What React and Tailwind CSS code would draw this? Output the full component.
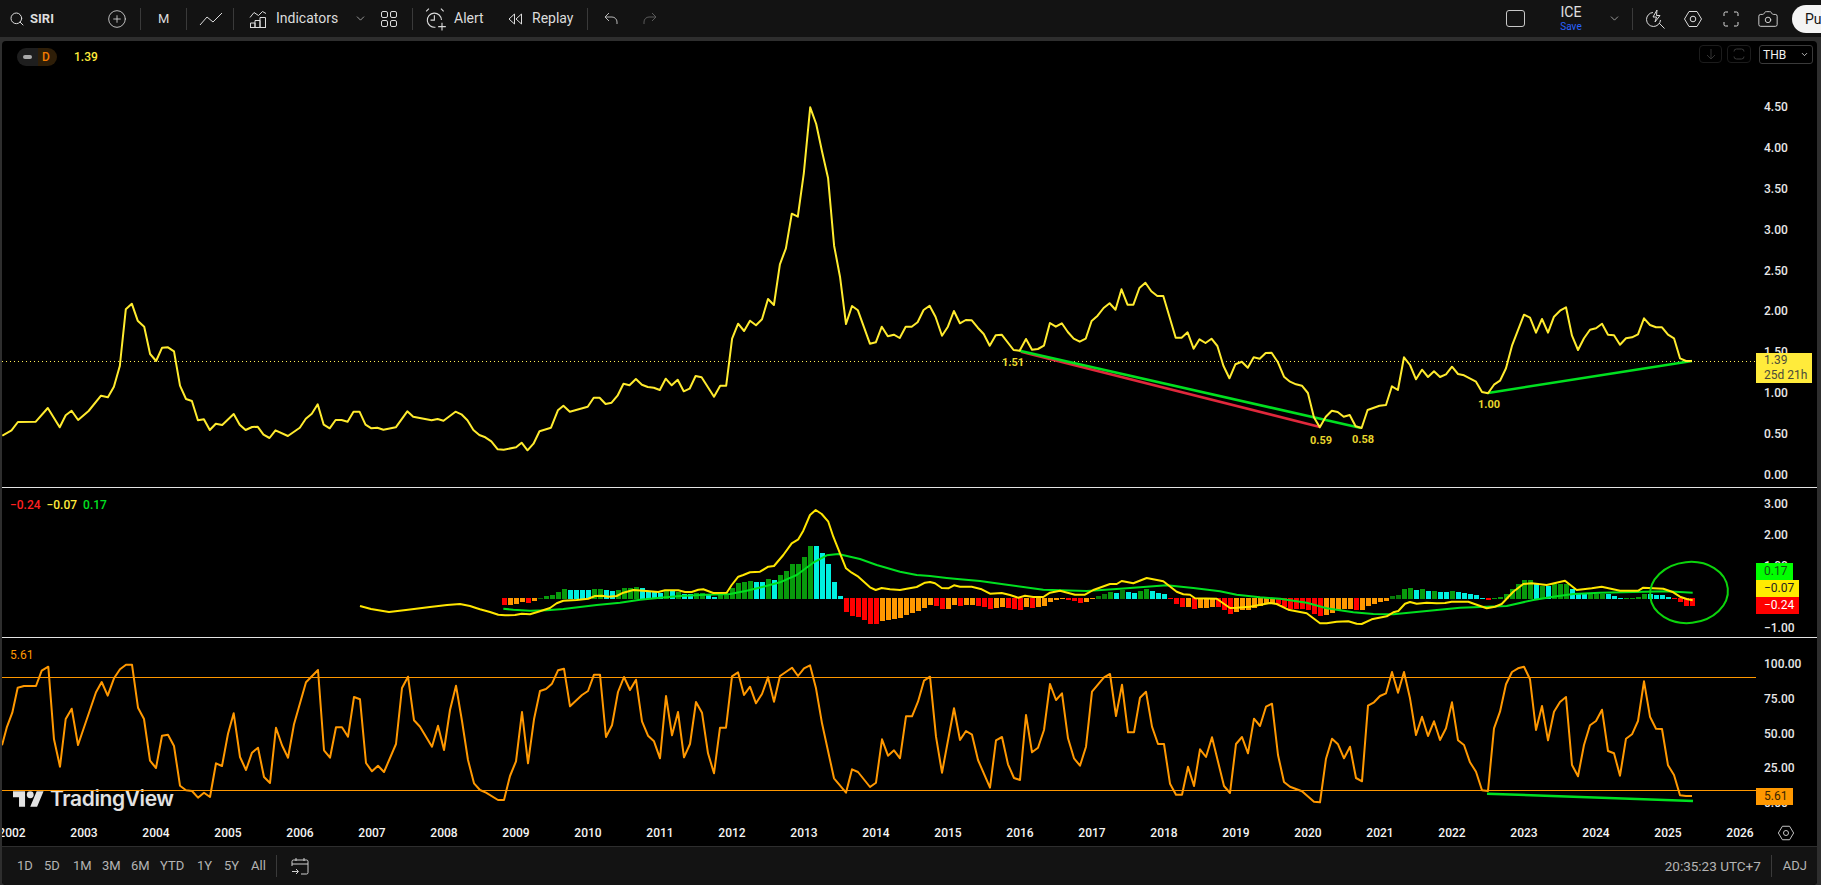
import { CirclePlus, ChevronDown, Camera, Search } from "lucide-react";

// chart data is read off the picture, x/y in crop units then moved to page coords
const pts = (list, x0, sx, y0) =>
  list.trim().split(/\s+/).map((p) => {
    const [a, b] = p.split(",");
    return `${(x0 + a / sx).toFixed(1)},${(y0 + b / 3).toFixed(1)}`;
  }).join(" ");

const price = [
  pts(`5,497 25,481 39,456 78,455 104,414 130,472 143,436 156,422 170,450 193,423 220,377 235,382 248,350 261,288 274,118 287,101 300,152 314,170 327,252 340,273 353,233 366,232 379,244 392,347 405,387 418,393 431,451 444,448 457,480 470,461 484,465 509,432 522,464 535,480 549,471 561,470 574,494 587,504 600,481 627,498 653,473 666,446 679,431 692,403 705,464 718,475 731,450 744,450 757,455 770,425 783,425 796,464 809,475 822,473 835,479 862,472 887,424 900,440 940,451 953,447 966,452 992,425 1005,433 1018,451 1031,480 1044,495 1057,502 1070,514 1084,538 1097,539 1124,532 1136,518 1149,541 1162,521 1175,484 1200,473 1215,421 1227,407 1241,425 1280,410 1293,383 1306,383 1319,402 1332,398 1345,377 1358,341 1371,346 1385,327 1398,344 1411,351 1424,353 1437,360 1450,326 1463,346 1476,329 1489,364 1502,356 1515,318 1528,322 1555,380`, 0, 2.178, 270),
  pts(`44,887 57,887 70,746 83,701 96,723 109,692 122,706 135,688 148,627 161,645 174,523 187,475 200,371 213,380 226,250 240,52 253,102 266,185 279,265 292,467 305,560 318,702 331,648 344,661 370,761 383,757 396,710 409,739 422,734 435,744 448,710 461,710 474,697 487,660 500,647 513,680 527,737 540,710 553,663 566,700 579,690 592,691 605,713 618,732 631,767 644,736 657,734 683,780 696,782 710,747 723,779 736,777 749,767 762,699 775,710 788,700 801,726 814,746 827,755 840,746 853,693 866,677 879,654 892,640 905,659 918,598 931,644 944,644 957,594 970,578 983,604 996,618 1009,618 1036,743 1049,743 1062,727 1075,776 1088,748 1101,759 1114,746 1127,768 1140,827 1153,865 1166,823 1180,815 1193,833 1206,802 1219,806 1232,789 1245,788 1258,815 1272,860 1285,875 1298,883 1311,887 1324,909 1337,982 1350,1012 1363,980 1376,962 1389,966 1402,980 1415,975 1428,1009 1441,1014 1454,960 1480,947 1494,945 1507,889 1520,900`, 700, 2.178, 90),
  pts(`12,172 30,195 48,238 66,209 84,231 102,214 120,231 138,223 156,200 174,222 192,226 228,245 246,276 264,280 282,254 300,242 318,205 336,137 372,44 390,53 408,98 426,57 444,98 462,50 480,32 498,22 516,107 534,150 552,115 570,89 588,85 606,71 624,104 642,106 660,134 678,115 696,112 714,103 732,55 750,75 768,82 786,82 804,104 822,115 840,175 858,183 876,183`, 1400, 3, 300),
].join(" ");

const macdFast = [
  "360,606 371,609 389,612 406,610 430,607 447,605 460,604 470,606 476,608",
  pts(`0,388 30,396 55,404 75,406 105,405 125,401 150,403 175,395 210,384 230,370 250,362 290,360 325,356 345,348 365,347 385,350 410,348 430,338 460,330 500,333 535,336 555,331 595,331 615,336 635,336 655,329 670,328 700,339 740,338 755,315 775,290 790,285 810,277 840,275 865,260 882,258 910,225 935,190 955,178 970,152 990,105 1007,90 1025,102 1045,125 1060,170 1080,220 1098,265 1115,278 1135,290 1170,322 1187,330 1205,324 1230,328 1260,330 1280,326 1310,321 1335,308 1350,306 1365,310 1385,324 1405,325 1422,316`, 480, 3, 480),
  pts(`0,320 35,320 65,328 90,341 125,339 150,345 175,353 195,347 220,351 250,351 270,338 300,332 345,344 375,344 400,330 450,312 470,312 485,303 520,310 560,294 610,304 650,335 670,343 690,344 705,355 770,356 810,384 830,383 870,380 930,369 950,372 985,389 1040,400 1080,430 1100,430 1130,425 1165,424 1190,431 1205,432 1235,418 1280,409 1300,397 1315,393 1335,371 1350,366 1370,371 1400,368 1430,370 1455,369 1475,365`, 960, 3, 480),
  pts(`180,905 205,905 230,914 260,925 285,920 305,912 340,875 370,852 395,850 440,855 495,842 530,870 575,865 605,860 660,872 715,872 730,863 790,866 820,877 840,890 860,897 878,901`, 1400, 3, 300),
].join(" ");

const macdSlow = [
  pts(`70,386 100,389 150,392 200,391 250,387 300,381 350,375 420,368 480,359 540,353 600,348 680,344 750,342 800,332 850,320 900,307 950,285 1000,248 1040,226 1075,222 1140,237 1190,255 1260,275 1310,285 1350,288 1400,294`, 480, 3, 480),
  pts(`0,298 60,303 130,313 250,329 380,333 480,326 620,316 700,324 780,334 830,344 900,352 960,356 1040,368 1100,385 1180,397 1240,402 1300,403 1400,393 1500,383`, 960, 3, 480),
  pts(`260,920 320,918 400,900 460,890 520,882 600,878 700,876 800,874 878,878`, 1400, 3, 300),
].join(" ");

const rsi = [
  pts(`6,316 20,263 37,218 53,143 72,138 108,138 125,92 145,80 162,298 180,380 197,237 215,206 234,315 288,157 305,126 323,167 342,115 360,88 378,74 396,74 414,203 432,237 450,362 468,384 486,287 504,284 522,318 540,437 558,451 576,453 594,473 612,458 630,471 648,370 666,378 684,281 701,220 720,351 738,390 756,338 774,323 792,411 810,429 828,263 846,316 864,353 882,253 918,127 954,90 972,331 990,353 1008,262 1026,262 1044,290 1062,171 1080,178 1098,369 1116,394 1134,377 1152,396 1188,312 1206,144 1224,110 1242,241 1260,260 1296,320 1314,257 1332,330 1350,210 1368,137 1386,243 1404,360 1422,430`, 0, 3, 640),
  pts(`0,450 18,458 54,480 72,480 90,408 108,364 126,216 144,370 162,238 180,153 198,147 216,131 234,91 252,86 270,199 306,165 324,153 342,104 360,104 378,291 396,256 414,156 432,111 450,150 468,119 486,244 504,287 522,304 540,355 558,168 576,286 594,216 612,352 630,312 648,186 666,218 684,340 702,400 720,263 738,263 756,109 774,97 792,165 810,140 828,190 846,162 864,112 882,185 900,108 936,83 954,108 972,85 990,76 1008,145 1026,250 1062,415 1098,458 1116,388 1134,396 1170,441 1188,428 1206,298 1224,347 1242,331 1260,355 1278,229 1296,229 1314,185 1332,122 1350,110 1368,290 1386,398 1422,205`, 480, 3, 640),
  pts(`0,300 18,273 36,284 54,360 90,443 108,301 126,291 144,373 162,414 180,420 198,225 216,337 234,323 252,270 270,132 288,180 306,160 324,295 342,355 360,377 378,320 396,155 432,112 450,102 468,228 486,134 504,277 522,277 540,173 558,155 576,260 594,312 612,312 630,431 648,464 666,464 684,380 702,438 720,328 738,351 756,292 792,438 810,459 828,312 846,291 864,340 882,236 900,258 918,200 936,191 954,345 972,426 990,440 1026,454 1062,485 1080,487 1098,356 1116,296 1134,313 1152,355 1170,320 1188,414 1206,424 1224,197 1242,187 1260,168 1278,160 1296,96 1314,158 1332,96 1350,175 1368,285 1386,230 1404,288 1422,244`, 960, 3, 640),
  pts(`120,300 138,265 156,187 174,301 192,315 210,367 228,395 246,451 264,453 282,265 300,215 318,133 336,96 354,85 372,80 390,118 408,270 426,198 444,301 462,215 480,186 498,171 516,375 534,409 552,315 570,256 588,243 606,209 624,333 642,340 660,407 678,296 696,283 714,243 732,124 750,230 768,266 786,267 804,376 822,405 840,466 858,468 876,468`, 1400, 3, 640),
].join(" ");

const barColors = { R: "#ff0000", O: "#ff9800", G: "#089a0c", D: "#087c0a", C: "#00f0e0" };
const barBlocks = [
  { x0: 502, y0: 480, d: "R375 O375 O372 O366 R369 O363 G355 G348 G345 G336 G327 C330 C330 C330 C330 G327 G327 C330 C333 G330 G324 G324 G321 C324 C333 C336 C339 G333 C333 G336 C342 C342 G339 G339 C345 C351 G342 G345 G324 G309 G306 G303 C306 C306 G297 C300 G285 G273 G252 G252 G231 G198 C198 C219 C252 C306 C348 R396 R408 R411 R420 R432 R432 O423 O420 O417 O414 O405 O399 O393 O384 O375 R378 R387 O387 O375 R378 O375 O375 R378" },
  { x0: 982, y0: 480, d: "R381 R387 O384 O381 R384 R387 R390 O381 R384 O381 O378 O366 O360 O357 R360 R363 R369 O366 O357 D348 D342 G336 C339 D330 C336 C339 G333 G327 C333 C339 C342 R357 R372 R381 O381 R387 O384 O384 O381 R381 R390 R402 O396 O390 O390 O384 O378 O372 O372 R372 R381 R387 R387 R387 R390 R402 R408 O405 O399 O390 O387 O387 R390 O390 O378 O372 O366 O363 D348 D345 G327 G324 C330 G327 C333 G333 C336 C336 G333 C336" },
  { x0: 1462, y0: 300, d: "C879 C882 C885 C894 R900 G894 G891 G882 G867 G852 G840 G840 C849 G858 C858 G852 G852 G852 C867 C882 C882 G882 G882 G882 C882 C888 C894 G894 G894 G891 G882 C882 C885 C885 C891 R897 R906 R918 R918" },
];

function MacdBars() {
  let rects = [];
  barBlocks.forEach((b) => {
    b.d.split(" ").forEach((item, i) => {
      const type = item[0];
      const y = b.y0 + Number(item.slice(1)) / 3;
      const neg = type === "R" || type === "O";
      rects.push(
        <rect key={`${b.x0}-${i}`} x={b.x0 + i * 6} width="5" y={neg ? 598 : y} height={neg ? y - 598 : 599 - y} fill={barColors[type]} />
      );
    });
  });
  return rects;
}

function Sep({ className = "" }) {
  return <div className={`w-px h-[22px] bg-[#3a3a3a] shrink-0 ${className}`} />;
}

function Icon({ w = 18, h = 18, box, className = "", children }) {
  return (
    <svg width={w} height={h} viewBox={box || `0 0 ${w} ${h}`} fill="none" stroke="currentColor" strokeWidth="1" className={`shrink-0 ${className}`}>
      {children}
    </svg>
  );
}

function HexGear({ size = 20 }) {
  return (
    <Icon w={size} h={size} box="0 0 20 20">
      <path d="M6 2.5h8l4.5 7.5-4.5 7.5H6L1.5 10z" strokeLinejoin="round" />
      <circle cx="10" cy="10" r="2.8" />
    </Icon>
  );
}

function TopBar() {
  return (
    <div className="h-[37px] bg-[#131313] flex items-center text-[#dcdcdc] text-[14px] shrink-0 overflow-hidden">
      <Search size={16} strokeWidth={1.5} className="ml-[9px] shrink-0" />
      <span className="ml-[5px] w-[77px] font-bold text-[13px] leading-none">SIRI</span>
      <CirclePlus size={20} strokeWidth={1} className="shrink-0" />
      <Sep className="ml-[13px]" />
      <span className="ml-[17px] w-[28px] text-[13px]">M</span>
      <Sep />
      <Icon w={24} h={16} className="ml-[12px]">
        <path d="M1 14l7-8 6 5 9-9" />
      </Icon>
      <Sep className="ml-[10px]" />
      <Icon w={18} h={18} className="ml-[15px]">
        <path d="M1 7.5l4-5 4.500 3L13.500 1.500 17 3.500" />
        <path d="M1.500 17v-4h4.500v4M6 17v-6.500h5V17M11 17V7.500h5.500V17M1 17.500h16" />
      </Icon>
      <span className="ml-[9px] w-[78px]">Indicators</span>
      <ChevronDown size={13} strokeWidth={1.2} className="shrink-0" />
      <Icon w={16} h={16} className="ml-[14px]">
        <rect x="0.500" y="0.500" width="6" height="6" rx="1.500" />
        <rect x="9.500" y="0.500" width="6" height="6" rx="1.500" />
        <rect x="0.500" y="9.500" width="6" height="6" rx="1.500" />
        <rect x="9.500" y="9.500" width="6" height="6" rx="1.500" />
      </Icon>
      <Sep className="ml-[15px]" />
      <Icon w={22} h={24} box="0 0 20 22" className="ml-[12px]">
        <path d="M15 12a6.500 6.500 0 1 0-5.500 6.500" />
        <path d="M8.500 7.500v4.500H5M1 4l2.500-2.500M17 4l-2.500-2.500M15.500 14.500v7M12 18h7" />
      </Icon>
      <span className="ml-[7px] w-[53px]">Alert</span>
      <Icon w={16} h={16}>
        <path d="M7.500 3L2 8l5.500 5zM14.500 3L9 8l5.500 5z" strokeLinejoin="round" />
      </Icon>
      <span className="ml-[9px] w-[55px]">Replay</span>
      <Sep />
      <Icon w={14} h={13} className="ml-[16px] text-[#b8b8b8]">
        <path d="M5 1L1 5l4 4M1 5h7a5 5 0 0 1 5 5v2" />
      </Icon>
      <Icon w={14} h={13} className="ml-[25px] text-[#5a5a5a]">
        <path d="M9 1l4 4-4 4M13 5H6a5 5 0 0 0-5 5v2" />
      </Icon>
      <div className="flex-1" />
      <div className="w-[19px] h-[17px] border border-[#c8c8c8] rounded-[3px] shrink-0" />
      <div className="ml-[36px] w-[20px] flex flex-col items-center leading-none shrink-0">
        <span className="text-[14px] text-[#e0e0e0]">ICE</span>
        <span className="text-[10px] text-[#2962ff] mt-[3px]">Save</span>
      </div>
      <ChevronDown size={13} strokeWidth={1.2} className="ml-[27px] shrink-0" />
      <Sep className="ml-[11px]" />
      <Icon w={19} h={20} className="ml-[13px]">
        <path d="M7 3.500a7 7 0 1 0 7.500 7.500M13 14l5.500 5.500" />
        <path d="M11 1L7 8h3.500L9 13l5-6.500h-3.500z" strokeLinejoin="round" />
      </Icon>
      <div className="ml-[18px] shrink-0"><HexGear /></div>
      <Icon w={16} h={16} className="ml-[20px]">
        <path d="M1 5V2.500A1.500 1.500 0 0 1 2.500 1H5M11 1h2.500A1.500 1.500 0 0 1 15 2.500V5M15 11v2.500a1.500 1.500 0 0 1-1.500 1.500H11M5 15H2.500A1.500 1.500 0 0 1 1 13.500V11" />
      </Icon>
      <Camera size={22} strokeWidth={1} className="ml-[18px] shrink-0" />
      <div className="ml-[13px] w-[29px] h-[28px] bg-[#f4f4f4] rounded-l-[14px] pl-[13px] text-[#131313] leading-[28px] overflow-hidden shrink-0 whitespace-nowrap">
        Publish
      </div>
    </div>
  );
}

function PriceAxis({ labels, className = "", children }) {
  return (
    <div className={`relative w-[61px] shrink-0 flex flex-col justify-between pl-2 text-[12px] font-medium leading-[14px] text-[#e8e8e8] ${className}`}>
      {labels.map((l) => <span key={l}>{l}</span>)}
      {children}
    </div>
  );
}

function Tag({ className = "", children }) {
  return <div className={`absolute left-0 pl-2 h-[17px] text-[12px] leading-[17px] font-normal ${className}`}>{children}</div>;
}

function MainPane() {
  return (
    <div className="h-[446px] flex shrink-0 border-b border-[#e4e4e4] box-content">
      <div className="relative flex-1 overflow-hidden">
        <svg className="absolute inset-0" width="1754" height="446" viewBox="2 41 1754 446" fill="none">
          <line x1="2" x2="1756" y1="361.500" y2="361.500" stroke="#ffee58" strokeDasharray="1 3" />
          <line x1="1021" y1="351.700" x2="1320" y2="427" stroke="#e0283c" strokeWidth="2.500" />
          <line x1="1019.600" y1="350.700" x2="1361" y2="428" stroke="#00e020" strokeWidth="2.500" />
          <line x1="1488" y1="393" x2="1692" y2="361" stroke="#00e020" strokeWidth="2.500" />
          <polyline points={price} stroke="#ffeb2e" strokeWidth="2" strokeLinejoin="round" />
        </svg>
        <div className="absolute left-[15px] top-[7px] h-[18px] flex items-center rounded-full overflow-hidden text-[12px] font-medium">
          <div className="w-[21px] h-full bg-[#1e1e1e] flex items-center justify-center">
            <div className="w-[9px] h-[4px] rounded-full bg-[#aaa]" />
          </div>
          <div className="w-[19px] h-full bg-[#2e1e08] text-[#f57c00] text-center leading-[18px] pr-[3px]">D</div>
        </div>
        <span className="absolute left-[72px] top-[9px] text-[12px] leading-[14px] font-medium text-[#ffeb3b]">1.39</span>
        <span className="absolute left-[1000px] top-[315px] text-[11px] leading-[14px] font-bold text-[#e8d52c]">1.51</span>
        <span className="absolute left-[1308px] top-[393px] text-[11px] leading-[14px] font-bold text-[#e8d52c]">0.59</span>
        <span className="absolute left-[1350px] top-[392px] text-[11px] leading-[14px] font-bold text-[#e8d52c]">0.58</span>
        <span className="absolute left-[1476px] top-[357px] text-[11px] leading-[14px] font-bold text-[#e8d52c]">1.00</span>
        <div className="absolute right-[34px] top-[4px] w-[23px] h-[18px] border border-[#1c1c1c] rounded-[4px] flex items-center justify-center text-[#333]">
          <Icon w={10} h={11}><path d="M5 0v9.500M1 6l4 4 4-4" /></Icon>
        </div>
        <div className="absolute right-[5px] top-[4px] w-[24px] h-[18px] border border-[#1c1c1c] rounded-[4px] flex items-center justify-center text-[#3a3a3a]">
          <Icon w={12} h={12}><path d="M1 3.500A2.500 2.500 0 0 1 3.500 1h5A2.500 2.500 0 0 1 11 3.500M11 8.500A2.500 2.500 0 0 1 8.500 11h-5A2.500 2.500 0 0 1 1 8.500" /></Icon>
        </div>
      </div>
      <PriceAxis
        labels={["4.50", "4.00", "3.50", "3.00", "2.50", "2.00", "1.50", "1.00", "0.50", "0.00"]}
        className="pt-[59px] pb-[5px]"
      >
        <div className="absolute left-[3px] top-[4px] w-[54px] h-[19px] border border-[#3a3a3a] rounded-[3px] flex items-center justify-between pl-[3px] pr-[3px] bg-black text-[#f0f0f0] text-[12px] font-normal">
          THB
          <ChevronDown size={9} strokeWidth={2} />
        </div>
        <div className="absolute left-0 top-[312px] w-[56px] h-[30px] bg-[#ffeb3b] pl-2 text-[#4a4a3a] text-[12px] font-normal leading-[15px]">
          <div>1.39</div>
          <div>25d 21h</div>
        </div>
      </PriceAxis>
    </div>
  );
}

function MacdPane() {
  return (
    <div className="h-[149px] flex shrink-0 border-b border-[#e4e4e4] box-content">
      <div className="relative flex-1 overflow-hidden">
        <svg className="absolute inset-0" width="1754" height="149" viewBox="2 488 1754 149" fill="none">
          <MacdBars />
          <polyline points={macdSlow} stroke="#00e020" strokeWidth="2" strokeLinejoin="round" />
          <polyline points={macdFast} stroke="#ffe600" strokeWidth="2" strokeLinejoin="round" />
          <ellipse cx="1689" cy="592.500" rx="39" ry="30.500" transform="rotate(-6 1689 592.500)" stroke="#0cd40c" strokeWidth="2" />
        </svg>
        <div className="absolute left-[8px] top-[10px] flex gap-[6px] text-[12px] leading-[14px] font-medium">
          <span className="text-[#ff2020]">−0.24</span>
          <span className="text-[#ffeb3b]">−0.07</span>
          <span className="text-[#00e020]">0.17</span>
        </div>
      </div>
      <PriceAxis labels={["3.00", "2.00", "1.00", "0.00", "−1.00"]} className="pt-[9px] pb-[2px]">
        <Tag className="top-[75px] w-[37px] bg-[#00ff00] text-[#145214]">0.17</Tag>
        <Tag className="top-[92px] w-[43px] bg-[#ffeb00] text-[#222]">−0.07</Tag>
        <Tag className="top-[109px] w-[43px] bg-[#ff0000] text-white">−0.24</Tag>
      </PriceAxis>
    </div>
  );
}

function RsiPane() {
  return (
    <div className="h-[182px] flex shrink-0">
      <div className="relative flex-1 overflow-hidden">
        <div className="absolute left-[11px] top-[150px] flex items-center gap-[6px] text-[#e2e2e2]">
          <svg width="31" height="16" viewBox="0 4 36 18" fill="currentColor">
            <path d="M14 22H7V11H0V4h14v18zM28 22h-8l7.500-18h8L28 22z" />
            <circle cx="20" cy="8" r="4" />
          </svg>
          <span className="font-['Inter',sans-serif] font-semibold text-[21px] leading-none tracking-[-0.4px]">TradingView</span>
        </div>
        <svg className="absolute inset-0" width="1754" height="182" viewBox="2 638 1754 182" fill="none">
          <line x1="2" x2="1756" y1="677.500" y2="677.500" stroke="#ff9800" />
          <line x1="2" x2="1756" y1="790.500" y2="790.500" stroke="#ff9800" />
          <line x1="1487" y1="793.700" x2="1693" y2="801" stroke="#00e020" strokeWidth="2.500" />
          <polyline points={rsi} stroke="#ff9800" strokeWidth="2" strokeLinejoin="round" />
        </svg>
        <span className="absolute left-[8px] top-[10px] text-[12px] leading-[14px] text-[#ff9800]">5.61</span>
      </div>
      <PriceAxis labels={["100.00", "75.00", "50.00", "25.00", "0.00"]} className="pt-[19px] pb-[10px]">
        <Tag className="top-[150px] w-[37px] bg-[#ff9800] text-[#3a2500]">5.61</Tag>
      </PriceAxis>
    </div>
  );
}

function TimeAxis() {
  const years = [];
  for (let y = 2002; y <= 2026; y++) years.push(y);
  return (
    <div className="h-[26px] flex shrink-0 border-b border-[#2e2e2e] box-content">
      <div className="flex-1 flex items-center overflow-hidden text-[12px] font-medium text-[#f4f4f4]">
        <div className="flex ml-[-26px]">
          {years.map((y) => <span key={y} className="w-[72px] shrink-0 text-center">{y}</span>)}
        </div>
      </div>
      <div className="w-[61px] shrink-0 flex items-center pl-[21px] text-[#d8d8d8]">
        <HexGear size={18} />
      </div>
    </div>
  );
}

function BottomBar() {
  const ranges = [["1D", "w-[27px]"], ["5D", "w-[29px]"], ["1M", "w-[29px]"], ["3M", "w-[29px]"], ["6M", "w-[29px]"], ["YTD", "w-[37px]"], ["1Y", "w-[27px]"], ["5Y", "w-[27px]"], ["All", "w-[27px]"]];
  return (
    <div className="flex-1 flex items-center bg-[#131313] text-[13px] text-[#b4b4b4] rounded-b-[4px] overflow-hidden">
      <div className="flex ml-[15px]">
        {ranges.map(([r, w]) => <span key={r} className={w}>{r}</span>)}
      </div>
      <Sep className="ml-[-2px]" />
      <Icon w={18} h={18} className="ml-[14px] text-[#d0d0d0]">
        <path d="M1 9V4.500A1.500 1.500 0 0 1 2.500 3h13A1.500 1.500 0 0 1 17 4.500V15.500a1.500 1.500 0 0 1-1.500 1.500H10M1 7h16M5 1v3M13 1v3M1 14.500h6M5 12l2.500 2.500L5 17" />
      </Icon>
      <div className="flex-1" />
      <span className="text-[13.5px]">20:35:23 UTC+7</span>
      <Sep className="ml-[10px]" />
      <span className="ml-[11px] mr-[10px]">ADJ</span>
    </div>
  );
}

export default function App() {
  return (
    <div className="w-full h-screen bg-[#2e2e2e] flex flex-col overflow-hidden font-['Roboto',sans-serif]">
      <TopBar />
      <div className="mt-[4px] ml-[2px] mr-[4px] flex-1 flex flex-col min-h-0 bg-black rounded-[4px] overflow-hidden">
        <MainPane />
        <MacdPane />
        <RsiPane />
        <TimeAxis />
        <BottomBar />
      </div>
    </div>
  );
}
